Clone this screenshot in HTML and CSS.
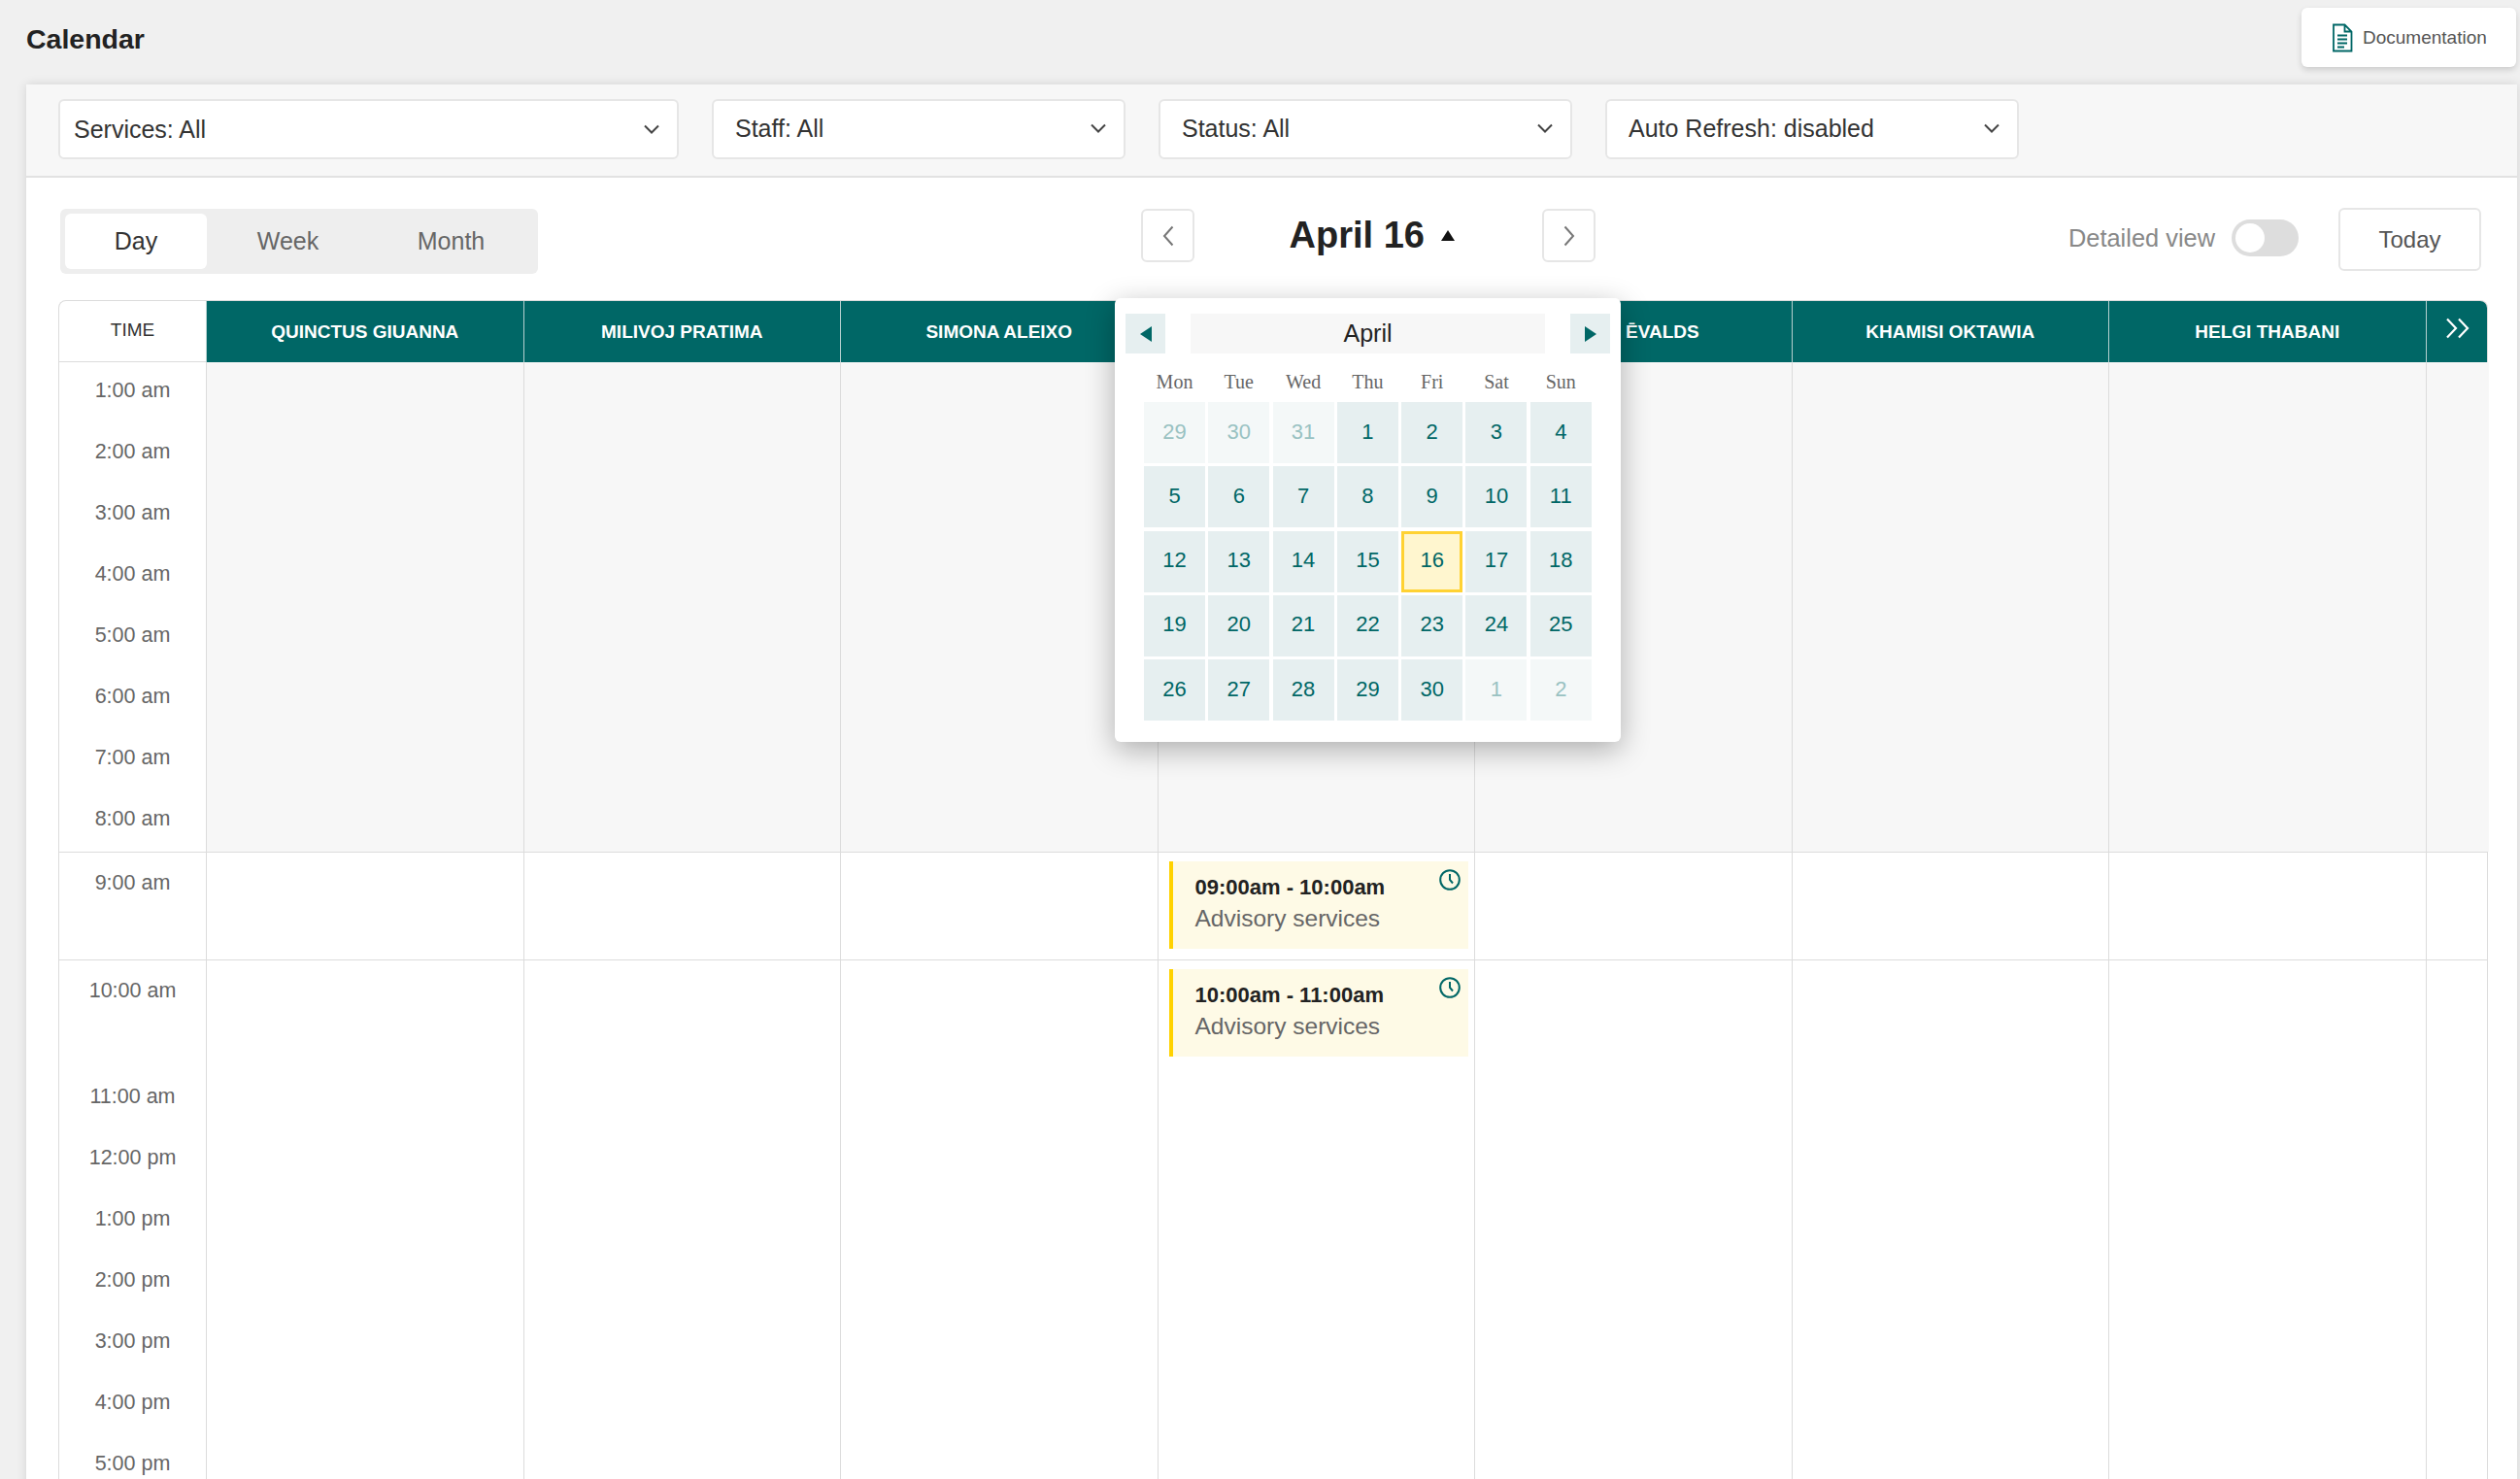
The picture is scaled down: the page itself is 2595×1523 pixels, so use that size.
FILE: index.html
```html
<!DOCTYPE html>
<html lang="en">
<head>
  <meta charset="UTF-8">
  <meta name="viewport" content="width=device-width, initial-scale=1.0">
  <title>Calendar</title>
  <link rel="stylesheet" href="styles.css">
</head>
<body>

<header class="page-head">
  <h1>Calendar</h1>
  <a class="doc-link" href="#">
    <svg class="doc-icon" viewBox="0 0 22 30" width="22" height="30">
      <path d="M2 1.5h11.500l7 7v20h-18.500z M13.500 1.500v7h7" fill="none" stroke="#006766" stroke-width="1.800"/>
      <path d="M6 12.500h10M6 16.500h10M6 20.500h10M6 24.500h7" fill="none" stroke="#006766" stroke-width="1.800"/>
    </svg>
    Documentation
  </a>
</header>

<main class="panel">

  <div class="filters">
    <div class="filter filter-wide">Services: All
      <svg class="chevron" viewBox="0 0 16 10" width="16" height="10"><path d="M1 1.500l7 7 7-7" fill="none" stroke="#444" stroke-width="2"/></svg>
    </div>
    <div class="filter">Staff: All
      <svg class="chevron" viewBox="0 0 16 10" width="16" height="10"><path d="M1 1.500l7 7 7-7" fill="none" stroke="#444" stroke-width="2"/></svg>
    </div>
    <div class="filter">Status: All
      <svg class="chevron" viewBox="0 0 16 10" width="16" height="10"><path d="M1 1.500l7 7 7-7" fill="none" stroke="#444" stroke-width="2"/></svg>
    </div>
    <div class="filter">Auto Refresh: disabled
      <svg class="chevron" viewBox="0 0 16 10" width="16" height="10"><path d="M1 1.500l7 7 7-7" fill="none" stroke="#444" stroke-width="2"/></svg>
    </div>
  </div>

  <div class="toolbar">
    <div class="tabs">
      <span class="tab tab-day active">Day</span>
      <span class="tab tab-week">Week</span>
      <span class="tab tab-month">Month</span>
    </div>

    <div class="date-nav">
      <button class="nav-btn">
        <svg viewBox="0 0 12 22" width="12" height="22"><path d="M10.500 1.500l-8.500 9.500 8.500 9.500" fill="none" stroke="#777" stroke-width="2"/></svg>
      </button>
      <div class="date-title">April 16 <span class="caret"></span></div>
      <button class="nav-btn">
        <svg viewBox="0 0 12 22" width="12" height="22"><path d="M1.500 1.500l8.500 9.500-8.500 9.500" fill="none" stroke="#777" stroke-width="2"/></svg>
      </button>
    </div>

    <div class="view-opts">
      <span class="detail-label">Detailed view</span>
      <span class="toggle"><span class="knob"></span></span>
      <button class="today-btn">Today</button>
    </div>
  </div>

  <div class="schedule">
    <div class="row head-row">
      <div class="time-head">TIME</div>
      <div class="staff">QUINCTUS GIUANNA</div>
      <div class="staff">MILIVOJ PRATIMA</div>
      <div class="staff">SIMONA ALEIXO</div>
      <div class="staff">ANDREAS MAREK</div>
      <div class="staff">TITUS ĒVALDS</div>
      <div class="staff">KHAMISI OKTAWIA</div>
      <div class="staff">HELGI THABANI</div>
      <div class="staff more">
        <svg viewBox="0 0 26 22" width="26" height="22"><path d="M2 1.500l9 9.500-9 9.500M14 1.500l9 9.500-9 9.500" fill="none" stroke="#fff" stroke-width="2.200"/></svg>
      </div>
    </div>

    <!-- closed hours -->
    <div class="row off-row">
      <div class="times">
        <div class="slot">1:00 am</div>
        <div class="slot">2:00 am</div>
        <div class="slot">3:00 am</div>
        <div class="slot">4:00 am</div>
        <div class="slot">5:00 am</div>
        <div class="slot">6:00 am</div>
        <div class="slot">7:00 am</div>
        <div class="slot">8:00 am</div>
      </div>
      <div class="cell"></div><div class="cell"></div><div class="cell"></div><div class="cell"></div>
      <div class="cell"></div><div class="cell"></div><div class="cell"></div><div class="cell"></div>
    </div>

    <div class="row hour-row lined">
      <div class="times"><div class="slot">9:00 am</div></div>
      <div class="cell"></div><div class="cell"></div><div class="cell"></div>
      <div class="cell">
        <div class="event">
          <svg class="clock" viewBox="0 0 22 22" width="22" height="22"><circle cx="11" cy="11" r="9.800" fill="none" stroke="#006766" stroke-width="2"/><path d="M11 5v6l3 3.500" fill="none" stroke="#006766" stroke-width="2"/></svg>
          <div class="event-time">09:00am - 10:00am</div>
          <div class="event-name">Advisory services</div>
        </div>
      </div>
      <div class="cell"></div><div class="cell"></div><div class="cell"></div><div class="cell"></div>
    </div>

    <div class="row hour-row">
      <div class="times"><div class="slot">10:00 am</div></div>
      <div class="cell"></div><div class="cell"></div><div class="cell"></div>
      <div class="cell">
        <div class="event">
          <svg class="clock" viewBox="0 0 22 22" width="22" height="22"><circle cx="11" cy="11" r="9.800" fill="none" stroke="#006766" stroke-width="2"/><path d="M11 5v6l3 3.500" fill="none" stroke="#006766" stroke-width="2"/></svg>
          <div class="event-time">10:00am - 11:00am</div>
          <div class="event-name">Advisory services</div>
        </div>
      </div>
      <div class="cell"></div><div class="cell"></div><div class="cell"></div><div class="cell"></div>
    </div>

    <div class="row rest-row">
      <div class="times">
        <div class="slot">11:00 am</div>
        <div class="slot">12:00 pm</div>
        <div class="slot">1:00 pm</div>
        <div class="slot">2:00 pm</div>
        <div class="slot">3:00 pm</div>
        <div class="slot">4:00 pm</div>
        <div class="slot">5:00 pm</div>
        <div class="slot">6:00 pm</div>
      </div>
      <div class="cell"></div><div class="cell"></div><div class="cell"></div><div class="cell"></div>
      <div class="cell"></div><div class="cell"></div><div class="cell"></div><div class="cell"></div>
    </div>
  </div>

  <!-- date picker, open over the schedule -->
  <div class="picker">
    <div class="picker-head">
      <span class="picker-arrow"><span class="tri tri-left"></span></span>
      <span class="picker-month">April</span>
      <span class="picker-arrow"><span class="tri tri-right"></span></span>
    </div>
    <div class="weekdays">
      <span>Mon</span><span>Tue</span><span>Wed</span><span>Thu</span><span>Fri</span><span>Sat</span><span>Sun</span>
    </div>
    <div class="days">
      <span class="day out">29</span><span class="day out">30</span><span class="day out">31</span><span class="day">1</span><span class="day">2</span><span class="day">3</span><span class="day">4</span>
      <span class="day">5</span><span class="day">6</span><span class="day">7</span><span class="day">8</span><span class="day">9</span><span class="day">10</span><span class="day">11</span>
      <span class="day">12</span><span class="day">13</span><span class="day">14</span><span class="day">15</span><span class="day current">16</span><span class="day">17</span><span class="day">18</span>
      <span class="day">19</span><span class="day">20</span><span class="day">21</span><span class="day">22</span><span class="day">23</span><span class="day">24</span><span class="day">25</span>
      <span class="day">26</span><span class="day">27</span><span class="day">28</span><span class="day">29</span><span class="day">30</span><span class="day out">1</span><span class="day out">2</span>
    </div>
  </div>

</main>

</body>
</html>
```

FILE: styles.css
```css
html, body {
    height: 100%;
    overflow: hidden;
}

body {
    margin: 0;
    background-color: #f0f0f0;
    font-family: "Liberation Sans", Arial, sans-serif;
    color: #333;
}

button {
    font-family: inherit;
    background: #fff;
    padding: 0;
}

/* page head */
.page-head {
    display: flex;
    justify-content: space-between;
    align-items: flex-start;
    height: 87px;
    padding: 8px 4px 0 27px;
    box-sizing: border-box;
}

h1 {
    margin: 15px 0 0;
    font-size: 28.500px;
    line-height: 34px;
    color: #222;
}

.doc-link {
    display: flex;
    align-items: center;
    width: 221px;
    height: 61px;
    padding-left: 31px;
    box-sizing: border-box;
    background-color: #fff;
    border-radius: 6px;
    box-shadow: 0 3px 6px rgba(0, 0, 0, 0.15);
    font-size: 19px;
    color: #555;
    text-decoration: none;
}

.doc-icon {
    margin-right: 10px;
}

/* main panel */
.panel {
    position: relative;
    margin: 0 3px 0 27px;
    background-color: #fff;
    box-shadow: 0 0 10px rgba(0, 0, 0, 0.12);
}

.filters {
    display: flex;
    gap: 34px;
    height: 96px;
    padding: 15px 0 0 33px;
    box-sizing: border-box;
    background-color: #f7f7f7;
    border-bottom: 2px solid #e2e2e2;
}

.filter {
    display: flex;
    align-items: center;
    justify-content: space-between;
    width: 426px;
    height: 62px;
    padding: 0 18px 2px 22px;
    box-sizing: border-box;
    background-color: #fff;
    border: 2px solid #e6e6e6;
    border-radius: 6px;
    font-size: 25px;
    color: #333;
}

.filter-wide {
    width: 639px;
    padding-left: 14px;
    padding-bottom: 0;
}

/* toolbar */
.toolbar {
    display: flex;
    align-items: flex-start;
    height: 126px;
    padding: 31px 37px 0 35px;
    box-sizing: border-box;
}

.tabs {
    display: flex;
    width: 492px;
    height: 67px;
    margin-top: 1px;
    padding: 5px;
    box-sizing: border-box;
    background-color: #eee;
    border-radius: 6px;
}

.tab {
    display: flex;
    align-items: center;
    justify-content: center;
    font-size: 25px;
    color: #666;
}

.tab-day { width: 146px; }
.tab-week { width: 167px; }
.tab-month { width: 169px; }

.tab.active {
    background-color: #fff;
    border-radius: 6px;
    color: #333;
}

.date-nav {
    display: flex;
    align-items: center;
    margin: 1px 0 0 621px;
}

.nav-btn {
    display: flex;
    align-items: center;
    justify-content: center;
    width: 55px;
    height: 55px;
    border: 2px solid #e6e6e6;
    border-radius: 6px;
}

.date-title {
    display: flex;
    align-items: center;
    justify-content: center;
    gap: 7px;
    width: 358px;
    padding-left: 8px;
    box-sizing: border-box;
    font-size: 38px;
    font-weight: bold;
    color: #222;
    white-space: pre;
}

.caret {
    width: 0;
    height: 0;
    border-left: 7px solid transparent;
    border-right: 7px solid transparent;
    border-bottom: 11px solid #111;
}

.view-opts {
    display: flex;
    align-items: center;
    margin-left: auto;
}

.detail-label {
    margin: -3px 17px 0 0;
    font-size: 25.400px;
    color: #888;
}

.toggle {
    display: block;
    width: 69px;
    height: 38px;
    margin: -3px 41px 0 0;
    padding: 4px;
    box-sizing: border-box;
    background-color: #ddd;
    border-radius: 19px;
}

.knob {
    display: block;
    width: 30px;
    height: 30px;
    background-color: #fff;
    border-radius: 50%;
}

.today-btn {
    width: 147px;
    height: 65px;
    border: 2px solid #e6e6e6;
    border-radius: 6px;
    font-size: 24px;
    color: #555;
}

/* schedule */
.schedule {
    margin: 0 30px 0 33px;
}

.row {
    display: grid;
    grid-template-columns: 151px repeat(7, 326.500px) 65.500px;
    border-left: 1px solid #dcdcdc;
    border-right: 1px solid #dcdcdc;
    box-sizing: border-box;
}

.head-row {
    height: 64px;
    border-top: 1px solid #dcdcdc;
    border-radius: 8px 8px 0 0;
    overflow: hidden;
}

.time-head {
    display: flex;
    align-items: center;
    justify-content: center;
    padding-bottom: 2px;
    border-bottom: 1px solid #dcdcdc;
    font-size: 19px;
    color: #333;
}

.staff {
    display: flex;
    align-items: center;
    justify-content: center;
    background-color: #006766;
    border-left: 1px solid #b5d0cf;
    font-size: 19px;
    font-weight: bold;
    color: #fff;
}

.more {
    align-items: flex-start;
    padding-top: 17px;
}

.times {
    text-align: center;
    font-size: 21.500px;
    line-height: 22px;
    color: #666;
}

.slot {
    height: 63px;
    padding-top: 18px;
    box-sizing: border-box;
}

.cell {
    border-left: 1px solid #dcdcdc;
}

.off-row {
    height: 505px;
    border-bottom: 1px solid #dcdcdc;
}

.off-row .cell {
    background-color: #f7f7f7;
}

.hour-row {
    height: 111px;
}

.lined {
    border-bottom: 1px solid #dcdcdc;
}

.hour-row .slot {
    padding-top: 20px;
}

.event {
    position: relative;
    height: 90px;
    margin: 9px 6px 0 11px;
    padding: 11px 0 0 23px;
    box-sizing: border-box;
    background-color: #fefae6;
    border-left: 4px solid #ffd200;
}

.clock {
    position: absolute;
    top: 8px;
    right: 8px;
}

.event-time {
    font-size: 22px;
    font-weight: bold;
    line-height: 32px;
    color: #222;
}

.event-name {
    font-size: 24.500px;
    line-height: 32px;
    color: #666;
}

/* date picker */
.picker {
    position: absolute;
    top: 220px;
    left: 1121px;
    width: 521px;
    height: 457px;
    padding: 16px 11px 0;
    box-sizing: border-box;
    background-color: #fff;
    border-radius: 6px;
    box-shadow: 0 8px 30px rgba(0, 0, 0, 0.3);
}

.picker-head {
    display: flex;
    justify-content: space-between;
    height: 41px;
}

.picker-arrow {
    display: flex;
    align-items: center;
    justify-content: center;
    width: 41px;
    background-color: #e6eff0;
}

.tri {
    width: 0;
    height: 0;
    border-top: 8.500px solid transparent;
    border-bottom: 8.500px solid transparent;
}

.tri-left {
    border-right: 12px solid #006766;
}

.tri-right {
    border-left: 12px solid #006766;
}

.picker-month {
    width: 365px;
    background-color: #f7f7f7;
    text-align: center;
    font-size: 25px;
    line-height: 41px;
    color: #222;
}

.weekdays {
    display: grid;
    grid-template-columns: repeat(7, 63px);
    column-gap: 3.300px;
    height: 50px;
    margin-left: 19px;
    text-align: center;
    font-family: "Liberation Serif", "Times New Roman", serif;
    font-size: 20px;
    line-height: 58px;
    color: #666;
}

.days {
    display: grid;
    grid-template-columns: repeat(7, 63px);
    grid-auto-rows: 63px;
    gap: 3.300px;
    margin-left: 19px;
}

.day {
    display: flex;
    align-items: center;
    justify-content: center;
    padding-bottom: 2px;
    box-sizing: border-box;
    background-color: #e6eff0;
    font-size: 22px;
    color: #006766;
}

.day.out {
    background-color: #f4f8f8;
    color: #99c2c2;
}

.day.current {
    background-color: #fff6cf;
    border: 3px solid #ffd233;
}
```
